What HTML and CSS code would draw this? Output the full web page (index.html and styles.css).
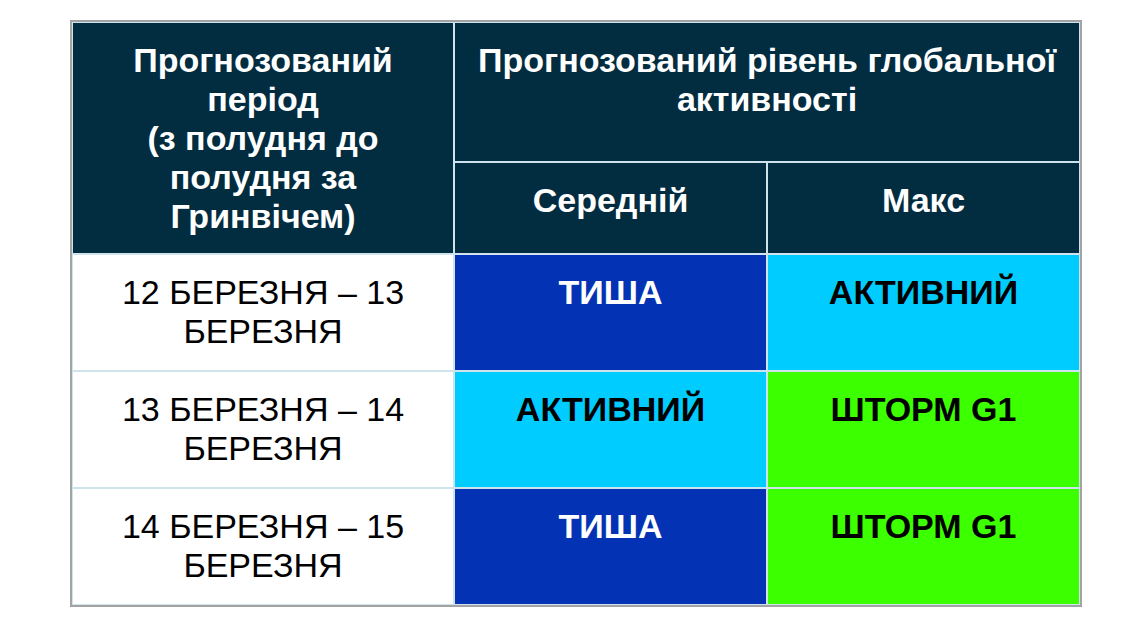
FILE: index.html
```html
<!DOCTYPE html>
<html lang="uk">
<head>
<meta charset="utf-8">
<title>Прогноз</title>
<link rel="stylesheet" href="styles.css">
</head>
<body>
<div class="page">
  <div class="frame">
    <table class="forecast">
      <thead>
        <tr class="h1">
          <th class="period" rowspan="2">Прогнозований період<br>(з полудня до полудня за Гринвічем)</th>
          <th colspan="2">Прогнозований рівень глобальної активності</th>
        </tr>
        <tr class="h2">
          <th>Середній</th>
          <th>Макс</th>
        </tr>
      </thead>
      <tbody>
        <tr>
          <td class="date">12 БЕРЕЗНЯ – 13 БЕРЕЗНЯ</td>
          <td class="lvl quiet">ТИША</td>
          <td class="lvl active">АКТИВНИЙ</td>
        </tr>
        <tr>
          <td class="date">13 БЕРЕЗНЯ – 14 БЕРЕЗНЯ</td>
          <td class="lvl active">АКТИВНИЙ</td>
          <td class="lvl storm">ШТОРМ G1</td>
        </tr>
        <tr>
          <td class="date">14 БЕРЕЗНЯ – 15 БЕРЕЗНЯ</td>
          <td class="lvl quiet">ТИША</td>
          <td class="lvl storm">ШТОРМ G1</td>
        </tr>
      </tbody>
    </table>
  </div>
</div>
</body>
</html>
```
FILE: styles.css
```css
html, body {
  margin: 0;
  padding: 0;
  background: #ffffff;
}
.page {
  padding: 20px 0 0 70px;
}
.frame {
  width: 1008px;
  border: 2px solid #a3a3a3;
  overflow: hidden;
  background: #cfe3ec;
}
.forecast {
  margin: -1px;
  border-collapse: separate;
  border-spacing: 2px;
  table-layout: fixed;
  width: 1010px;
  font-family: "Liberation Sans", Arial, sans-serif;
  font-size: 34px;
  line-height: 39px;
}
.forecast col {
}
.forecast th,
.forecast td {
  padding: 18px 16px 0;
  vertical-align: top;
  text-align: center;
}
.forecast th {
  background: #022c40;
  color: #ffffff;
  font-weight: bold;
}
.forecast .period {
  width: 348px;
}
.forecast .h1 {
  height: 138px;
}
.forecast .h2 {
  height: 90px;
}
.forecast tbody tr {
  height: 115px;
}
.forecast .date {
  background: #ffffff;
  color: #000000;
  font-weight: normal;
}
.forecast .lvl {
  font-weight: bold;
}
.forecast .quiet {
  background: #0432b4;
  color: #ffffff;
}
.forecast .active {
  background: #00ccff;
  color: #000000;
}
.forecast .storm {
  background: #3cff00;
  color: #000000;
}
```
